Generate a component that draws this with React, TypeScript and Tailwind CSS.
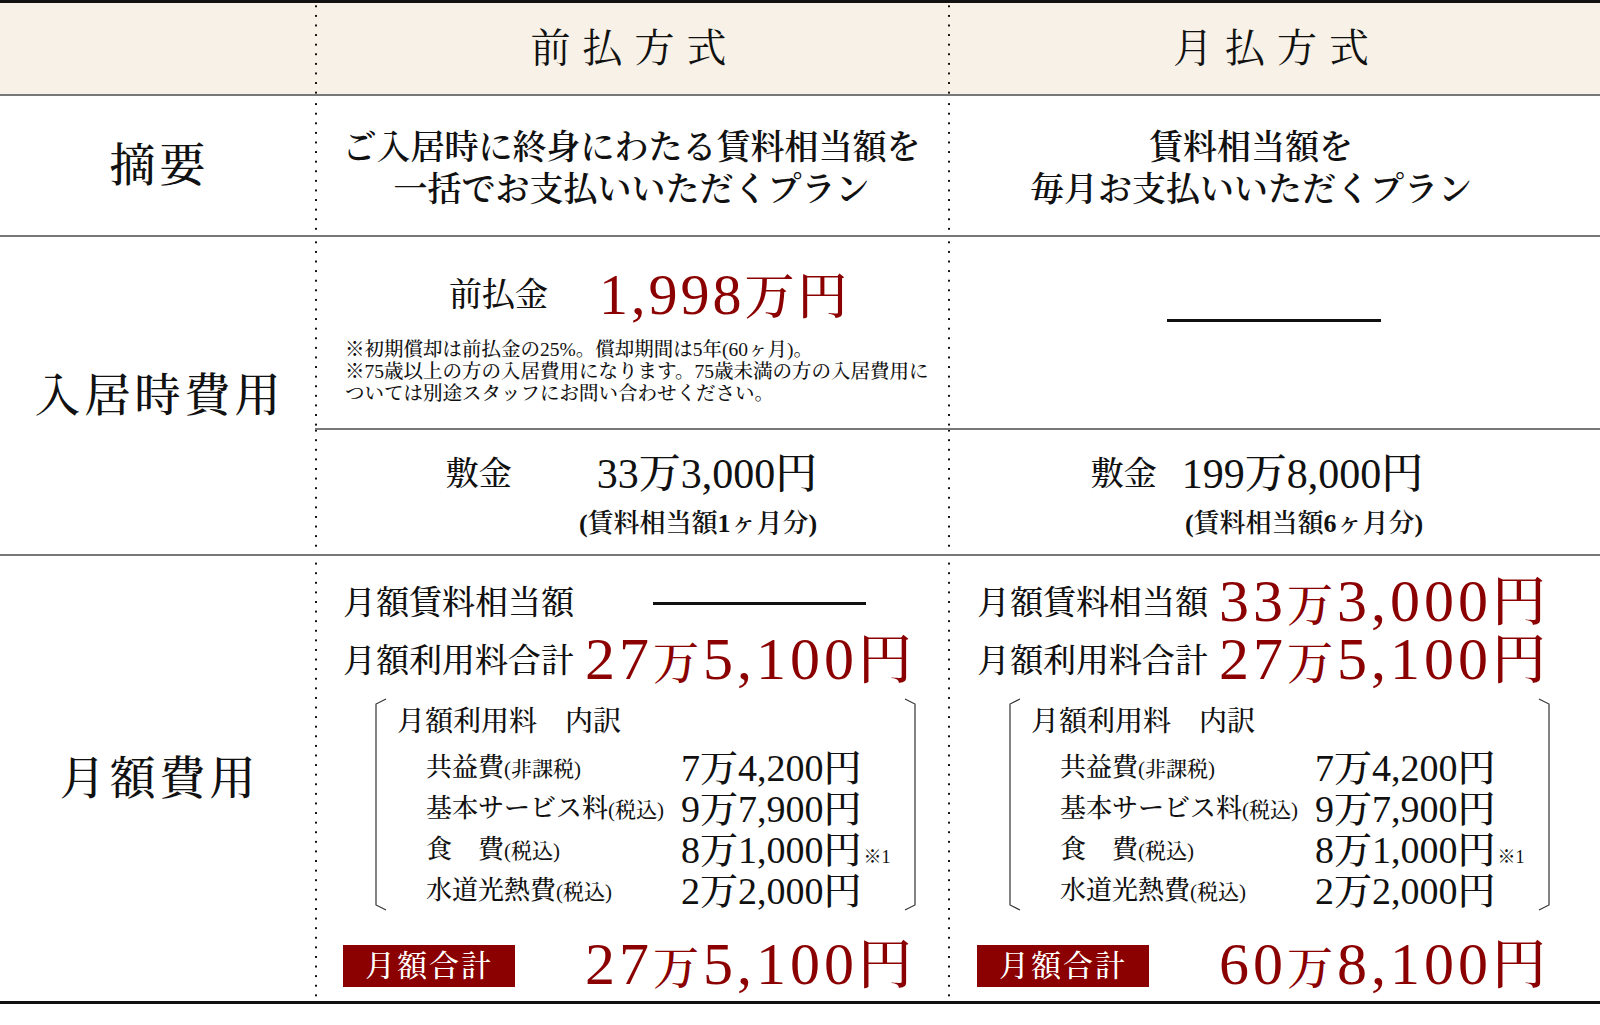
import React from "react"

// dotted column divider, drawn on the left edge of a cell
const dots = "bg-[linear-gradient(#111_2px,transparent_2px)] bg-[length:2px_9.6px] bg-repeat-y bg-left"

function Red({ a, b }: { a: string; b: string }) {
  return (
    <span className="text-[#8b0000] text-[60px] tracking-[4px] leading-[52px] whitespace-nowrap">
      {a}
      <span className="text-[46px]">万</span>
      {b}
      <span className="text-[54px]">円</span>
    </span>
  )
}

function Bracket({ flip }: { flip?: boolean }) {
  return (
    <svg width="12" height="213" viewBox="0 0 12 213" className="shrink-0">
      <path
        d={flip ? "M1 1 L11 6 L11 207 L1 212" : "M11 1 L1 6 L1 207 L11 212"}
        fill="none"
        stroke="#333"
        strokeWidth="1.2"
      />
    </svg>
  )
}

const items = [
  { label: "共益費", note: "(非課税)", man: "7", rest: "4,200", mark: false },
  { label: "基本サービス料", note: "(税込)", man: "9", rest: "7,900", mark: false },
  { label: "食　費", note: "(税込)", man: "8", rest: "1,000", mark: true },
  { label: "水道光熱費", note: "(税込)", man: "2", rest: "2,000", mark: false },
]

function Breakdown() {
  return (
    <div className="flex h-[213px] ml-[32px] mt-[8px]">
      <Bracket />
      <div className="flex-1 pt-[7px]">
        <div className="h-[34px] pl-[10px] flex items-center text-[28px] leading-none">月額利用料　内訳</div>
        <div className="mt-[8px] pl-[39px]">
          {items.map((it) => (
            <div key={it.label} className="h-[41px] flex items-center">
              <div className="w-[255px] text-[26px] leading-none whitespace-nowrap">
                {it.label}
                <span className="text-[21px]">{it.note}</span>
              </div>
              <div className="text-[38px] leading-none whitespace-nowrap">
                {it.man}万{it.rest}円
                {it.mark && <span className="text-[18px] ml-[2px]">※1</span>}
              </div>
            </div>
          ))}
        </div>
      </div>
      <Bracket flip />
    </div>
  )
}

function Monthly({ rent, use, sum, left }: { rent?: [string, string]; use: [string, string]; sum: [string, string]; left: string }) {
  return (
    <div className={`${dots} pt-[18px]`}>
      <div className={`w-[573px] ${left}`}>
        <div className="h-[58px] flex items-center justify-between">
          <span className="text-[33px] leading-none">月額賃料相当額</span>
          {rent ? <Red a={rent[0]} b={rent[1]} /> : <div className="w-[213px] h-[3px] bg-[#111] mr-[50px]" />}
        </div>
        <div className="h-[58px] flex items-center justify-between">
          <span className="text-[33px] leading-none">月額利用料合計</span>
          <Red a={use[0]} b={use[1]} />
        </div>
        <Breakdown />
        <div className="mt-[26px] h-[58px] flex items-center justify-between">
          <div className="w-[172px] h-[42px] bg-[#8b0000] text-white text-[30px] tracking-[2px] flex items-center justify-center leading-none">
            月額合計
          </div>
          <Red a={sum[0]} b={sum[1]} />
        </div>
      </div>
    </div>
  )
}

function Deposit({ gap, amount, months, right }: { gap: string; amount: string; months: string; right?: string }) {
  return (
    <div className={`${dots} pt-[20px] flex justify-center ${right ?? ""}`}>
      <div className="flex flex-col items-end">
        <div className="h-[48px] flex items-center">
          <span className="text-[33px] leading-none">敷金</span>
          <span className={`text-[42px] leading-none ${gap}`}>{amount}</span>
        </div>
        <div className="mt-[11px] h-[30px] flex items-center text-[26px] leading-none font-semibold">
          (賃料相当額{months}ヶ月分)
        </div>
      </div>
    </div>
  )
}

export default function App() {
  return (
    <div className="w-[1600px] bg-white text-[#111] font-medium font-[family-name:'Liberation_Serif','Noto_Serif_CJK_JP','Noto_Sans_CJK_JP',serif]">
      <div className="border-t-[3px] border-b-[3px] border-[#111]">
        {/* header */}
        <div className="grid grid-cols-[315px_633px_1fr] h-[91px] bg-[#f8f1e7]">
          <div />
          <div className={`${dots} flex items-center justify-center pl-[6px] text-[40px] tracking-[12px] font-normal`}>前払方式</div>
          <div className={`${dots} flex items-center justify-center pl-[6px] text-[40px] tracking-[12px] font-normal`}>月払方式</div>
        </div>

        {/* summary */}
        <div className="grid grid-cols-[315px_633px_1fr] h-[141px] border-t-2 border-[#777]">
          <div className="flex items-center justify-center text-[46px] tracking-[4px] pl-[4px]">摘要</div>
          <div className={`${dots} flex items-center justify-center pt-[7px] text-center text-[34px] leading-[42px] font-semibold`}>
            <div>
              ご入居時に終身にわたる賃料相当額を
              <br />
              一括でお支払いいただくプラン
            </div>
          </div>
          <div className={`${dots} flex items-center justify-center pt-[7px] pr-[46px] text-center text-[34px] leading-[42px] font-semibold`}>
            <div>
              賃料相当額を
              <br />
              毎月お支払いいただくプラン
            </div>
          </div>
        </div>

        {/* move-in costs */}
        <div className="grid grid-cols-[315px_1fr] h-[319px] border-t-2 border-[#777]">
          <div className="flex items-center justify-center text-[46px] tracking-[4px] pl-[4px]">入居時費用</div>
          <div className="flex flex-col">
            <div className="grid grid-cols-[633px_1fr] h-[191px]">
              <div className={`${dots} pl-[30px] pt-[28px]`}>
                <div className="flex items-center h-[60px] ml-[104px]">
                  <span className="text-[33px] leading-none">前払金</span>
                  <span className="ml-[51px] text-[#8b0000] tracking-[3px] leading-none whitespace-nowrap">
                    <span className="text-[58px]">1,998</span>
                    <span className="text-[50px]">万円</span>
                  </span>
                </div>
                <div className="mt-[14px] text-[19.5px] leading-[22px] whitespace-nowrap">
                  ※初期償却は前払金の25%。償却期間は5年(60ヶ月)。
                  <br />
                  ※75歳以上の方の入居費用になります。75歳未満の方の入居費用に
                  <br />
                  ついては別途スタッフにお問い合わせください。
                </div>
              </div>
              <div className={`${dots} flex items-center justify-center pb-[25px]`}>
                <div className="w-[214px] h-[3px] bg-[#111]" />
              </div>
            </div>
            <div className="grid grid-cols-[633px_1fr] flex-1 border-t-2 border-[#777]">
              <Deposit gap="ml-[85px]" amount="33万3,000円" months="1" />
              <Deposit gap="ml-[25px]" amount="199万8,000円" months="6" right="pr-[34px]" />
            </div>
          </div>
        </div>

        {/* monthly costs */}
        <div className="grid grid-cols-[315px_633px_1fr] h-[447px] border-t-2 border-[#777]">
          <div className="flex items-center justify-center text-[46px] tracking-[4px] pl-[4px]">月額費用</div>
          <Monthly use={["27", "5,100"]} sum={["27", "5,100"]} left="ml-[28px]" />
          <Monthly rent={["33", "3,000"]} use={["27", "5,100"]} sum={["60", "8,100"]} left="ml-[29px]" />
        </div>
      </div>
    </div>
  )
}
